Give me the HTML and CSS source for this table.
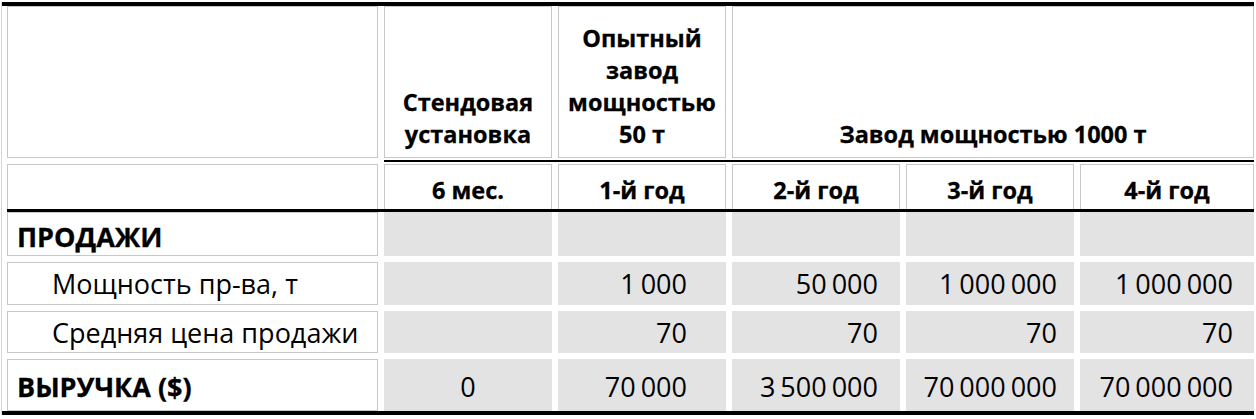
FILE: index.html
```html
<!DOCTYPE html>
<html lang="ru">
<head>
<meta charset="utf-8">
<title>Продажи</title>
<link rel="stylesheet" href="styles.css">
</head>
<body>
<div class="sheet">
  <div class="rule rule-top"></div>
  <div class="row head1">
    <div class="cell"></div>
    <div class="cell hd">Стендовая<br>установка</div>
    <div class="cell hd">Опытный<br>завод<br>мощностью<br>50 т</div>
    <div class="cell hd span3">Завод мощностью 1000 т</div>
  </div>
  <div class="midgap"><div class="rule rule-mid"></div></div>
  <div class="row head2">
    <div class="cell"></div>
    <div class="cell hd2">6 мес.</div>
    <div class="cell hd2">1-й год</div>
    <div class="cell hd2">2-й год</div>
    <div class="cell hd2">3-й год</div>
    <div class="cell hd2">4-й год</div>
  </div>
  <div class="rule rule-h2"></div>
  <div class="body">
    <div class="row data r-sect">
      <div class="cell label bold">ПРОДАЖИ</div>
      <div class="cell val"></div>
      <div class="cell val c3"></div>
      <div class="cell val c4"></div>
      <div class="cell val c5"></div>
      <div class="cell val c6"></div>
    </div>
    <div class="row data r-cap">
      <div class="cell label indent">Мощность пр-ва, т</div>
      <div class="cell val"></div>
      <div class="cell val c3">1 000</div>
      <div class="cell val c4">50 000</div>
      <div class="cell val c5">1 000 000</div>
      <div class="cell val c6">1 000 000</div>
    </div>
    <div class="row data r-price">
      <div class="cell label indent">Средняя цена продажи</div>
      <div class="cell val"></div>
      <div class="cell val c3">70</div>
      <div class="cell val c4">70</div>
      <div class="cell val c5">70</div>
      <div class="cell val c6">70</div>
    </div>
    <div class="row data r-total">
      <div class="cell label bold">ВЫРУЧКА ($)</div>
      <div class="cell val c2">0</div>
      <div class="cell val c3">70 000</div>
      <div class="cell val c4">3 500 000</div>
      <div class="cell val c5">70 000 000</div>
      <div class="cell val c6">70 000 000</div>
    </div>
  </div>
  <div class="rule rule-bottom"></div>
</div>
</body>
</html>
```

FILE: styles.css
```css
* { box-sizing: border-box; margin: 0; padding: 0; }
html, body { background: #fff; }
body { font-family: "Open Sans", "Noto Sans", sans-serif; color: #000; }

.sheet {
  margin: 2px 0 0 1px;
  border-left: 1px solid #d6d6d6;
  padding-left: 5px;
  width: 1253px;
}

.rule { background: #000; }
.rule-top { height: 4px; margin-left: -5px; }
.rule-bottom { height: 4px; margin-left: -5px; }
.rule-h2 { height: 3px; }
.midgap { height: 6px; padding-top: 2px; padding-left: 377px; }
.rule-mid { height: 2px; }

.row {
  display: grid;
  grid-template-columns: 371px 168px 168px 168px 168px 174px;
  column-gap: 6px;
}

.cell { border: 1px solid #c8c8c8; background: #fff; }

.head1 { height: 152px; }
.hd {
  display: flex;
  align-items: flex-end;
  justify-content: center;
  text-align: center;
  font-weight: 700;
  font-size: 23.5px;
  line-height: 32px;
  padding-bottom: 7px;
  -webkit-text-stroke: 0.3px #000;
}
.span3 { grid-column: 4 / span 3; }

.head2 { height: 45px; }
.head2 .cell { border-bottom: none; }
.hd2 {
  display: flex;
  align-items: center;
  justify-content: center;
  font-weight: 700;
  font-size: 23.5px;
  padding-top: 6px;
  -webkit-text-stroke: 0.3px #000;
}

.body { display: flex; flex-direction: column; gap: 6px; }
.r-sect { height: 44px; }
.r-cap { height: 43px; }
.r-price { height: 42px; }
.r-total { height: 52px; }

.data .cell { display: flex; align-items: center; font-size: 27px; }
.label { padding-left: 9px; white-space: nowrap; }
.label.bold { font-weight: 700; -webkit-text-stroke: 0.3px #000; }
.label.indent { padding-left: 44px; }
.r-sect .label { padding-top: 4px; }
.r-total .cell { padding-top: 2px; }

.val {
  background: #e3e3e3;
  border: none;
  justify-content: flex-end;
  word-spacing: -2px;
}
.c2 { justify-content: center; }
.c3 { padding-right: 39px; }
.c4 { padding-right: 22px; }
.c5 { padding-right: 17px; }
.c6 { padding-right: 21px; }
```
